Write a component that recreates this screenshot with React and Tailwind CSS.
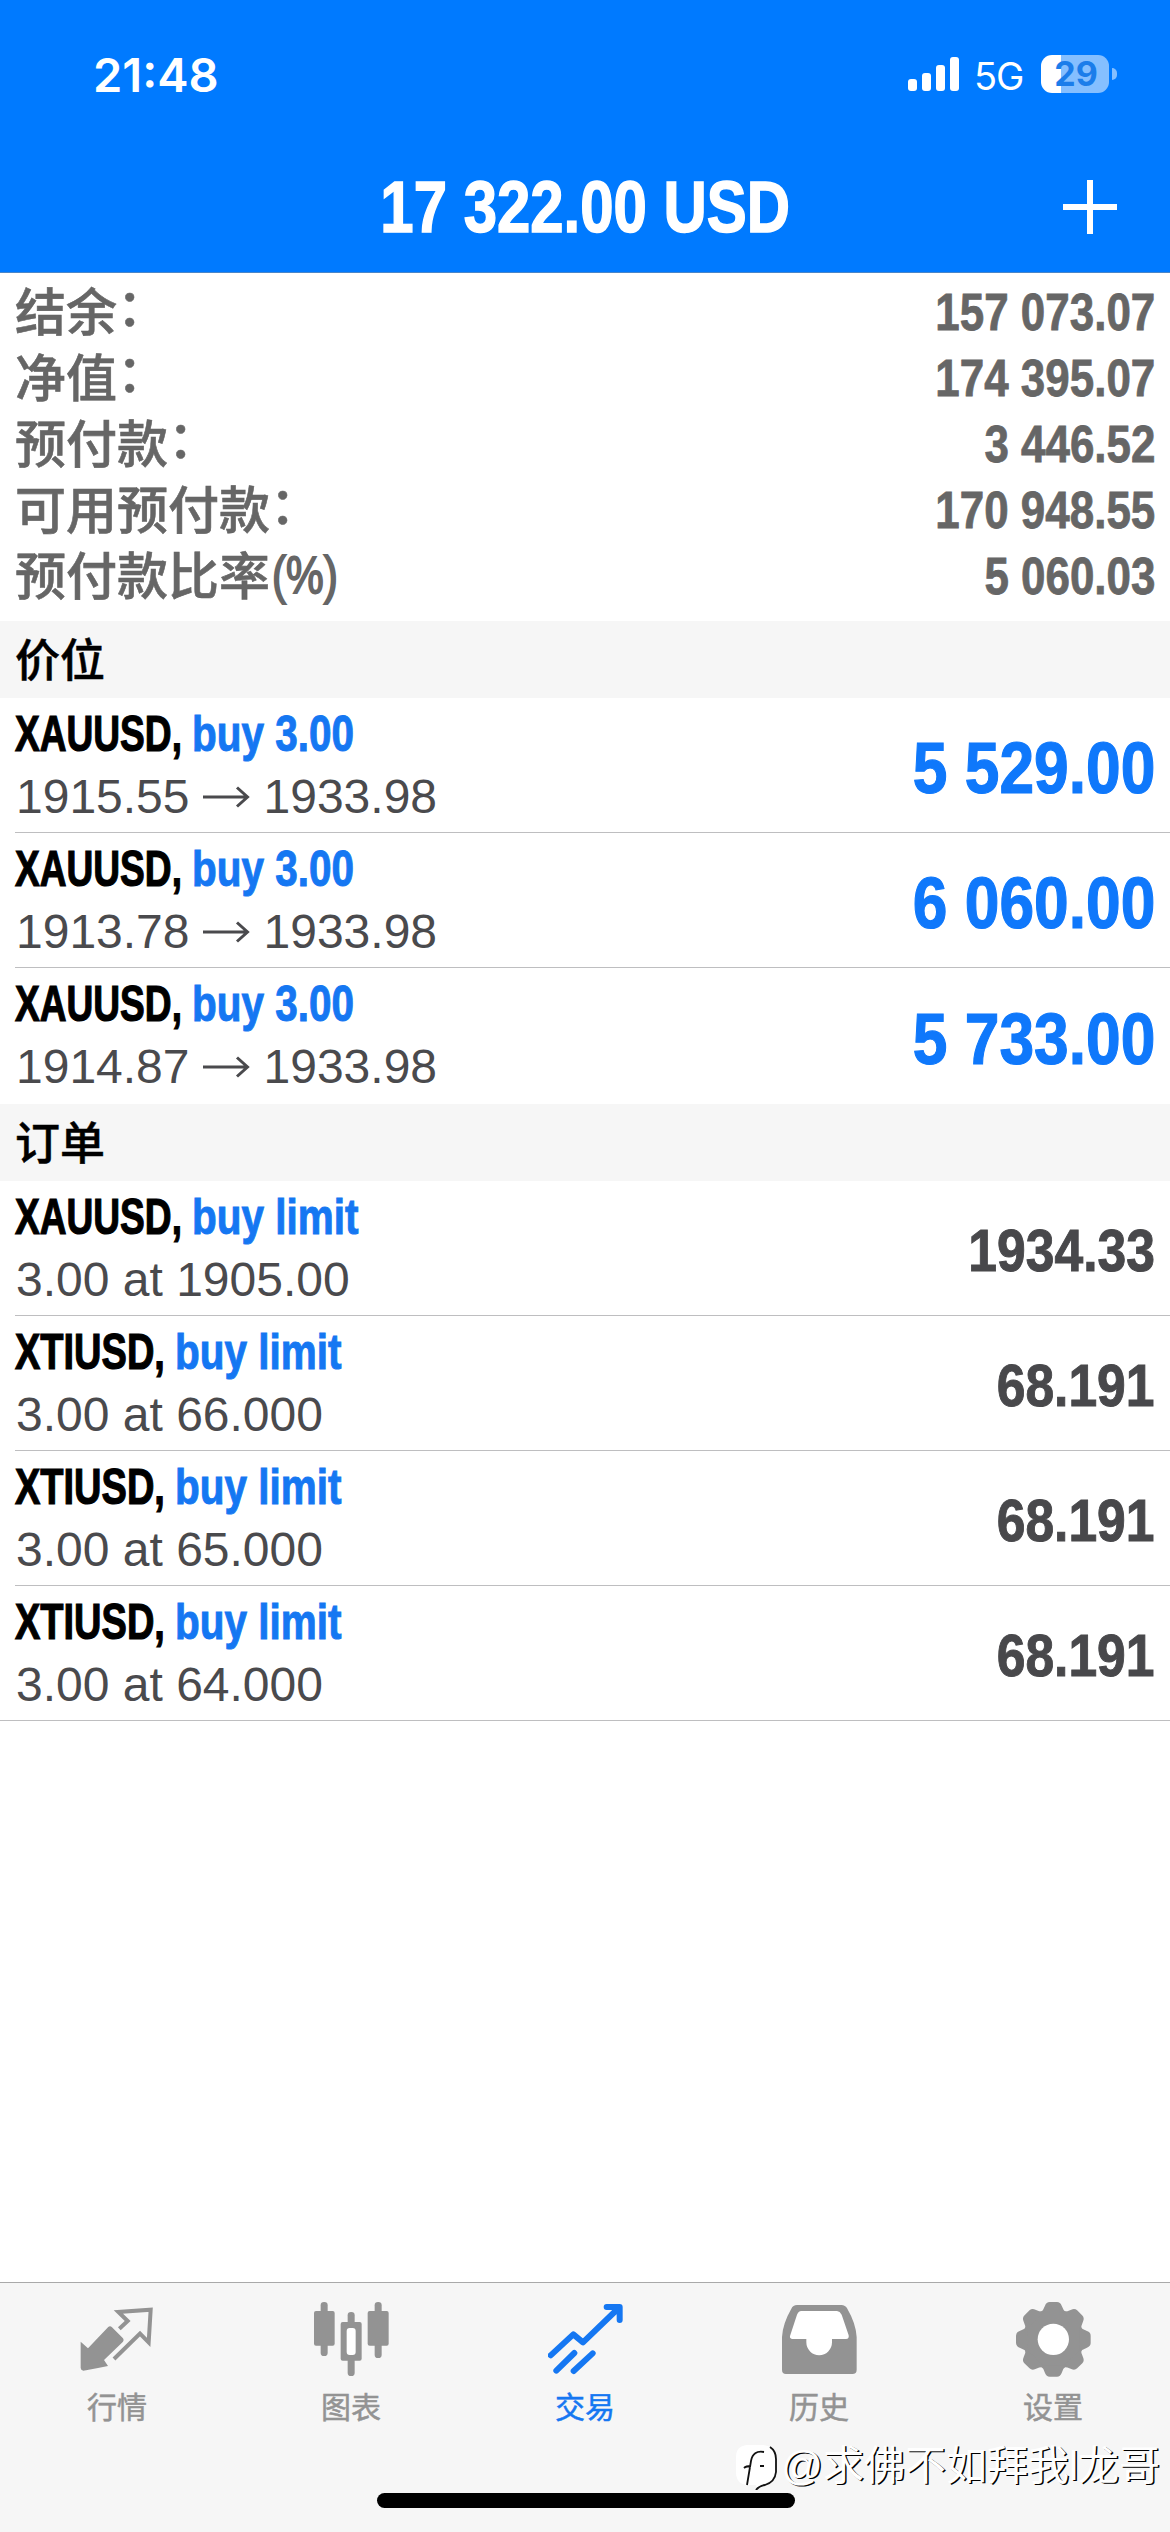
import clsx from 'clsx'

const summary = [
  { label: '结余', colon: true, value: '157 073.07' },
  { label: '净值', colon: true, value: '174 395.07' },
  { label: '预付款', colon: true, value: '3 446.52' },
  { label: '可用预付款', colon: true, value: '170 948.55' },
  { label: '预付款比率', unit: '(%)', value: '5 060.03' },
]

const positions = [
  { open: '1915.55', current: '1933.98', profit: '5 529.00' },
  { open: '1913.78', current: '1933.98', profit: '6 060.00' },
  { open: '1914.87', current: '1933.98', profit: '5 733.00' },
]

const orders = [
  { symbol: 'XAUUSD', price: '1905.00', current: '1934.33' },
  { symbol: 'XTIUSD', price: '66.000', current: '68.191' },
  { symbol: 'XTIUSD', price: '65.000', current: '68.191' },
  { symbol: 'XTIUSD', price: '64.000', current: '68.191' },
]

function StatusBar() {
  return (
    <div className="flex h-[147px] justify-between pl-[93px] pr-[53px] font-['Inter',sans-serif] text-white">
      <span className="pt-[47px] text-[47px] font-semibold leading-[56px]">21:48</span>
      <div className="flex h-[38px] items-center mt-[55px]">
        <div className="flex h-[34px] items-end gap-[5px]">
          <i className="h-[12px] w-[9px] rounded-[3px] bg-white" />
          <i className="h-[18px] w-[9px] rounded-[3px] bg-white" />
          <i className="h-[26px] w-[9px] rounded-[3px] bg-white" />
          <i className="h-[34px] w-[9px] rounded-[3px] bg-white" />
        </div>
        <span className="ml-[15px] mt-[4px] w-[67px] text-[38px] leading-[38px] tracking-[-1px]">5G</span>
        <div className="flex h-[38px] w-[68px] items-center justify-center rounded-[11px] bg-linear-to-r from-white from-29% to-[#85bfff] to-29% pl-[2px] text-[34px] font-bold leading-none text-[#1b7dea]">
          29
        </div>
        <i className="ml-[3px] h-[12px] w-[5px] rounded-r-full bg-[#85bfff]" />
      </div>
    </div>
  )
}

function Header() {
  return (
    <header className="h-[273px] border-b border-[#4a86c8] bg-[#007aff]">
      <StatusBar />
      <div className="grid grid-cols-[1fr_auto_1fr] items-center h-[120px]">
        <h1 className="col-start-2 scale-x-[0.832] text-[72px] font-bold leading-[120px] text-white [-webkit-text-stroke:1.5px]">
          17 322.00 USD
        </h1>
        <svg className="mr-[53px] justify-self-end" width="54" height="54" viewBox="0 0 54 54" stroke="#fff" strokeWidth="6">
          <path d="M27 0v54M0 27h54" />
        </svg>
      </div>
    </header>
  )
}

function SectionTitle({ children }) {
  return (
    <h2 className="h-[77px] bg-[#f6f6f6] pl-[15px] pt-[2px] text-[45px] font-medium leading-[77px] text-black [-webkit-text-stroke:0.5px]">
      {children}
    </h2>
  )
}

function Row({ symbol, action, value, valueClass, border, last, children }) {
  const isGold = symbol === 'XAUUSD'
  return (
    <div className={clsx('pl-[15px]', last && 'border-b border-[#bebec0]')}>
      <div className={clsx('flex justify-between pr-[15px]', last ? 'h-[134px]' : 'h-[135px]', border && 'border-b border-[#bebec0]')}>
        <div>
          <div className="flex h-[64px] pt-[7px] text-[50px] font-bold leading-[58px] whitespace-nowrap">
            <span className={clsx('text-black', isGold ? 'w-[177px]' : 'w-[160px]')}>
              <span className={clsx('inline-block origin-left [-webkit-text-stroke:1.2px]', isGold ? 'scale-x-[0.742]' : 'scale-x-[0.76]')}>
                {symbol},
              </span>
            </span>
            <span className="origin-left scale-x-[0.81] text-[#1577f2] [-webkit-text-stroke:1px]">{action}</span>
          </div>
          <div className="flex items-center pl-px pt-px text-[48px] leading-[68px] text-[#4a4a4d]">{children}</div>
        </div>
        <span className={clsx('origin-right self-center pt-[6px] font-bold leading-none', valueClass)}>{value}</span>
      </div>
    </div>
  )
}

function Arrow() {
  return (
    <svg className="mx-[13px]" width="48" height="24" viewBox="0 0 48 24" fill="none" stroke="currentColor" strokeWidth="3">
      <path d="M0 12h44M34 2.500l10.500 9.500l-10.500 9.500" />
    </svg>
  )
}

function QuotesIcon() {
  return (
    <svg width="75" height="75" viewBox="0 0 225 225" fill="none">
      <path
        fill="currentColor"
        d="M2 119L24 139L84 76Q90 70 96 76L129 109Q133 114 129 119L72 174L84 192Q47 200 10 206Q2 205 2 198Z"
      />
      <path stroke="currentColor" strokeWidth="12" d="M118 80L143 57L115 30L212 23L206 121L180 95L102 171" />
    </svg>
  )
}

function ChartsIcon() {
  return (
    <svg width="75" height="75" viewBox="0 0 225 225" fill="currentColor">
      <rect x="20" y="0" width="21" height="162" rx="10" />
      <rect x="0" y="27" width="62" height="104" rx="6" />
      <rect x="101" y="30" width="21" height="192" rx="10" />
      <rect x="80" y="60" width="63" height="116" rx="6" />
      <rect x="98" y="78" width="27" height="81" rx="9" fill="#fff" />
      <rect x="182" y="0" width="21" height="168" rx="10" />
      <rect x="161" y="27" width="63" height="104" rx="6" />
    </svg>
  )
}

function TradeIcon() {
  return (
    <svg width="75" height="75" viewBox="0 0 225 225" fill="none" stroke="currentColor" strokeWidth="18" strokeLinecap="round" strokeLinejoin="round">
      <path d="M8 160L76 97L105 121L212 18M176 15H215V54M25 206L79 153M77 207L134 154" />
    </svg>
  )
}

function HistoryIcon() {
  return (
    <svg width="75" height="75" viewBox="0 0 225 225" fill="currentColor">
      <path d="M45 9H178Q190 9 196 20Q222 65 224 105V203Q224 216 211 216H12Q0 216 0 203V105Q2 65 28 20Q33 9 45 9Z" />
      <path
        fill="#fff"
        d="M58 27H165Q174 28 179 38L200 100Q202 111 192 111H150V121A38 38 0 0 1 73 121V111H32Q22 110 24 102L45 38Q49 28 58 27Z"
      />
    </svg>
  )
}

function SettingsIcon() {
  return (
    <svg width="75" height="75" viewBox="0 0 225 225" fill="currentColor">
      <circle cx="112" cy="112" r="91" />
      {[0, 45, 90, 135, 180, 225, 270, 315].map((deg) => (
        <path key={deg} transform={`rotate(${deg} 112 112)`} d="M72 34Q82 26 87 11Q91 0 101 0H123Q133 0 137 11Q142 26 152 34Z" />
      ))}
      <circle cx="112" cy="112" r="47" fill="#fff" />
    </svg>
  )
}

const tabs = [
  { name: '行情', Icon: QuotesIcon },
  { name: '图表', Icon: ChartsIcon },
  { name: '交易', Icon: TradeIcon, active: true },
  { name: '历史', Icon: HistoryIcon },
  { name: '设置', Icon: SettingsIcon },
]

function TabBar() {
  return (
    <nav className="mt-auto grid h-[250px] grid-cols-5 border-t border-[#a9a9a9] bg-[#f6f6f6]">
      {tabs.map(({ name, Icon, active }) => (
        <div key={name} className={clsx('flex flex-col items-center pt-[19px]', active ? 'text-[#1577f2]' : 'text-[#939393]')}>
          <Icon />
          <span className="mt-[11px] text-[30px] leading-[40px] [-webkit-text-stroke:0.5px]">{name}</span>
        </div>
      ))}
    </nav>
  )
}

function Watermark() {
  return (
    <div className="absolute bottom-[38px] right-[10px] flex items-center text-white">
      <svg className="mr-[2px]" width="44" height="48" viewBox="0 0 44 48" fill="none">
        <path fill="#fff" d="M12 3H28Q40 4 40 16V29Q39 40 28 42L21 47V43H12Q1 42 1 30V15Q1 4 12 3Z" />
        <path stroke="#111" strokeWidth="1.800" d="M35 5Q41 9 41 17V30Q40 40 30 43Q24 44 21 48" />
        <path stroke="#111" strokeWidth="1.800" d="M29 10Q18 8 16 19L12 43M9 26Q11 24 16 24M25 24H29" />
      </svg>
      <span className="text-[41px] leading-[56px] whitespace-nowrap [text-shadow:1.5px_1px_0.5px_#000]">@求佛不如拜我l龙哥</span>
    </div>
  )
}

export default function App() {
  return (
    <div className="relative flex h-[2532px] w-[1170px] flex-col overflow-hidden bg-white font-['Liberation_Sans','Noto_Sans_CJK_SC',sans-serif]">
      <Header />
      <section className="h-[348px] pt-[6px] pl-[15px] pr-[15px] text-[#666]">
        {summary.map((item) => (
          <div key={item.label} className="flex h-[66px] items-center justify-between">
            <span className="flex pt-[4px] text-[51px] font-medium leading-[66px] [-webkit-text-stroke:0.6px]">
              {item.label}
              {item.colon && <span className="-translate-y-[5px]">：</span>}
              {item.unit && (
                <span className="ml-[2px] origin-left -translate-y-[2px] scale-x-[0.83] [-webkit-text-stroke:1.8px]">{item.unit}</span>
              )}
            </span>
            <span className="origin-right scale-x-[0.845] text-[52px] font-bold leading-[66px] [-webkit-text-stroke:0.8px]">
              {item.value}
            </span>
          </div>
        ))}
      </section>

      <SectionTitle>价位</SectionTitle>
      {positions.map((item, i) => (
        <Row
          key={item.open}
          symbol="XAUUSD"
          action="buy 3.00"
          value={item.profit}
          valueClass="scale-x-[0.865] text-[72px] text-[#0f78fb] [-webkit-text-stroke:1.2px]"
          border={i < positions.length - 1}
        >
          {item.open}
          <Arrow />
          {item.current}
        </Row>
      ))}

      <div className="pt-px">
        <SectionTitle>订单</SectionTitle>
      </div>
      {orders.map((item, i) => (
        <Row
          key={item.price}
          symbol={item.symbol}
          action="buy limit"
          value={item.current}
          valueClass="scale-x-[0.86] text-[60px] text-[#48484b] [-webkit-text-stroke:1px]"
          border={i < orders.length - 1}
          last={i === orders.length - 1}
        >
          3.00 at {item.price}
        </Row>
      ))}

      <TabBar />
      <div className="absolute bottom-[24px] left-[377px] h-[15px] w-[418px] rounded-full bg-black" />
      <Watermark />
    </div>
  )
}
